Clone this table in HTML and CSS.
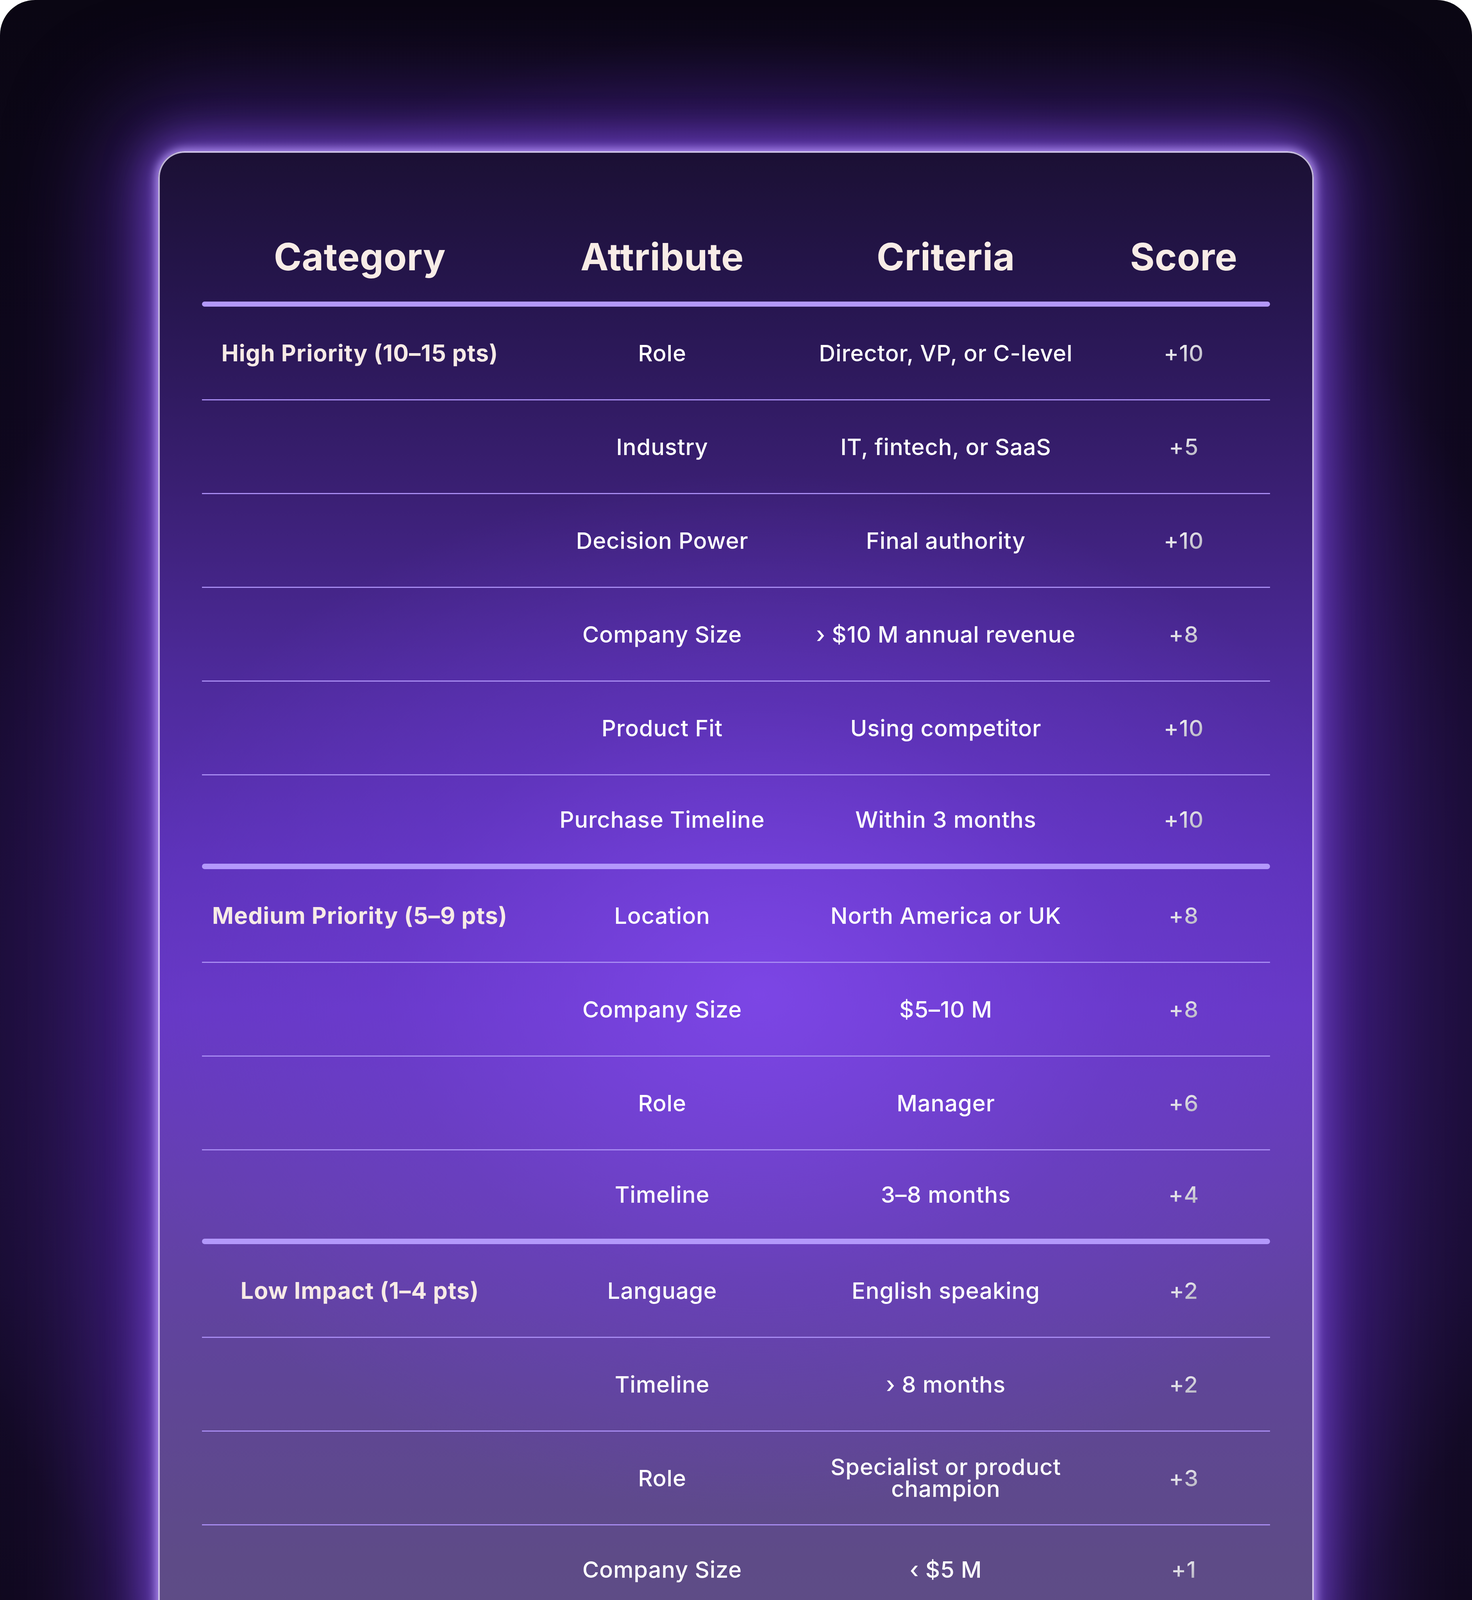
FILE: index.html
```html
<!DOCTYPE html>
<html lang="en">
<head>
<meta charset="utf-8">
<title>Lead Scoring</title>
<link rel="stylesheet" href="styles.css">
</head>
<body>
<div class="page">
  <div class="card">
    <div class="row head">
      <div class="cell">Category</div>
      <div class="cell">Attribute</div>
      <div class="cell">Criteria</div>
      <div class="cell score-h">Score</div>
    </div>
    <div class="rule head-rule"></div>

    <div class="row">
      <div class="cell cat">High Priority (10–15 pts)</div>
      <div class="cell">Role</div>
      <div class="cell">Director, VP, or C-level</div>
      <div class="cell score"><span>+10</span></div>
    </div>
    <div class="row">
      <div class="cell cat"></div>
      <div class="cell">Industry</div>
      <div class="cell">IT, fintech, or SaaS</div>
      <div class="cell score"><span>+5</span></div>
    </div>
    <div class="row">
      <div class="cell cat"></div>
      <div class="cell">Decision Power</div>
      <div class="cell">Final authority</div>
      <div class="cell score"><span>+10</span></div>
    </div>
    <div class="row">
      <div class="cell cat"></div>
      <div class="cell">Company Size</div>
      <div class="cell">› $10 M annual revenue</div>
      <div class="cell score"><span>+8</span></div>
    </div>
    <div class="row">
      <div class="cell cat"></div>
      <div class="cell">Product Fit</div>
      <div class="cell">Using competitor</div>
      <div class="cell score"><span>+10</span></div>
    </div>
    <div class="row end">
      <div class="cell cat"></div>
      <div class="cell">Purchase Timeline</div>
      <div class="cell">Within 3 months</div>
      <div class="cell score"><span>+10</span></div>
    </div>
    <div class="rule"></div>

    <div class="row">
      <div class="cell cat">Medium Priority (5–9 pts)</div>
      <div class="cell">Location</div>
      <div class="cell">North America or UK</div>
      <div class="cell score"><span>+8</span></div>
    </div>
    <div class="row">
      <div class="cell cat"></div>
      <div class="cell">Company Size</div>
      <div class="cell">$5–10 M</div>
      <div class="cell score"><span>+8</span></div>
    </div>
    <div class="row">
      <div class="cell cat"></div>
      <div class="cell">Role</div>
      <div class="cell">Manager</div>
      <div class="cell score"><span>+6</span></div>
    </div>
    <div class="row end">
      <div class="cell cat"></div>
      <div class="cell">Timeline</div>
      <div class="cell">3–8 months</div>
      <div class="cell score"><span>+4</span></div>
    </div>
    <div class="rule"></div>

    <div class="row">
      <div class="cell cat">Low Impact (1–4 pts)</div>
      <div class="cell">Language</div>
      <div class="cell">English speaking</div>
      <div class="cell score"><span>+2</span></div>
    </div>
    <div class="row">
      <div class="cell cat"></div>
      <div class="cell">Timeline</div>
      <div class="cell">› 8 months</div>
      <div class="cell score"><span>+2</span></div>
    </div>
    <div class="row">
      <div class="cell cat"></div>
      <div class="cell">Role</div>
      <div class="cell wrap">Specialist or product champion</div>
      <div class="cell score"><span>+3</span></div>
    </div>
    <div class="row end">
      <div class="cell cat"></div>
      <div class="cell">Company Size</div>
      <div class="cell">‹ $5 M</div>
      <div class="cell score"><span>+1</span></div>
    </div>
  </div>
</div>
</body>
</html>
```

FILE: styles.css
```css
html, body {
  margin: 0;
  padding: 0;
  background: #ffffff;
}

.page {
  width: 3768px;
  height: 4700px;
  border-radius: 90px;
  overflow: hidden;
  display: flex;
  align-items: center;
  justify-content: center;
  background:
    radial-gradient(ellipse 58% 50% at 50% 52%, rgba(112, 54, 210, 0.9) 0%, rgba(70, 30, 145, 0.65) 55%, rgba(25, 12, 50, 0) 100%),
    linear-gradient(180deg, #0a0613 0%, #130a25 40%, #160c2b 70%, #0d0717 100%);
  font-family: "Inter", "Noto Sans", "Liberation Sans", sans-serif;
}

.card {
  box-sizing: border-box;
  width: 2958px;
  height: 3926px;
  padding: 151px 108px 164px;
  border: 4px solid rgba(232, 222, 255, 0.8);
  border-radius: 68px;
  background:
    radial-gradient(ellipse 58% 34% at 52% 55%, rgba(128, 72, 235, 0.85) 0%, rgba(115, 62, 220, 0.35) 55%, rgba(110, 60, 210, 0) 100%),
    linear-gradient(180deg, #1b1034 0%, #271650 10%, #3a1f73 22%, #4d2a9a 34%, #5c32b8 46%, #6638c4 56%, #6440ad 68%, #5f4597 80%, #5e4b87 92%, #5f4f85 100%);
  box-shadow:
    0 0 24px 6px rgba(190, 160, 255, 0.85),
    0 0 100px 30px rgba(140, 90, 240, 0.6),
    0 0 340px 120px rgba(100, 48, 200, 0.5);
}

.row {
  box-sizing: border-box;
  height: 240px;
  display: grid;
  grid-template-columns: 808px 740px 712px 472px;
  align-items: center;
  border-bottom: 3px solid #a88cf2;
}

.row.end {
  height: 226px;
  border-bottom: none;
}

.row.head {
  height: 230px;
  border-bottom: none;
}

.cell {
  text-align: center;
  color: #ffffff;
  font-size: 58px;
  font-weight: 500;
  letter-spacing: 0.8px;
  line-height: 1;
  padding: 0 20px;
}

.head .cell {
  font-size: 96px;
  font-weight: 700;
  color: #f8ece6;
  letter-spacing: 0.5px;
}

.head .score-h {
  padding-left: 34px;
  padding-right: 0;
}

.cell.cat {
  color: #f7eae6;
  font-weight: 700;
  font-size: 59px;
  letter-spacing: 1px;
  padding: 0;
}

.cell.wrap {
  padding: 0 50px;
  line-height: 0.96;
}

.cell.score {
  padding-left: 34px;
  padding-right: 0;
}

.cell.score span {
  background: linear-gradient(150deg, #ffffff 15%, #cfcdd8 60%, #adabb9 100%);
  -webkit-background-clip: text;
  background-clip: text;
  color: transparent;
}

.rule {
  height: 14px;
  border-radius: 7px;
  background: #b398fb;
}

.rule.head-rule {
  height: 13px;
}
```
